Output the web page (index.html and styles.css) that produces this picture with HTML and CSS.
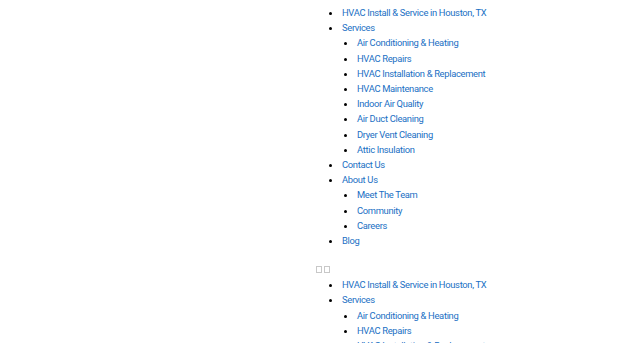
FILE: index.html
```html
<!DOCTYPE html>
<html>
<head>
<meta charset="utf-8">
<link rel="stylesheet" href="styles.css">
</head>
<body>
<nav class="menu">
  <ul class="list">
    <li><a href="#">HVAC Install &amp; Service in Houston, TX</a></li>
    <li><a href="#">Services</a>
      <ul class="sub">
        <li><a href="#">Air Conditioning &amp; Heating</a></li>
        <li><a href="#">HVAC Repairs</a></li>
        <li><a href="#">HVAC Installation &amp; Replacement</a></li>
        <li><a href="#">HVAC Maintenance</a></li>
        <li><a href="#">Indoor Air Quality</a></li>
        <li><a href="#">Air Duct Cleaning</a></li>
        <li><a href="#">Dryer Vent Cleaning</a></li>
        <li><a href="#">Attic Insulation</a></li>
      </ul>
    </li>
    <li><a href="#">Contact Us</a></li>
    <li><a href="#">About Us</a>
      <ul class="sub">
        <li><a href="#">Meet The Team</a></li>
        <li><a href="#">Community</a></li>
        <li><a href="#">Careers</a></li>
      </ul>
    </li>
    <li><a href="#">Blog</a></li>
  </ul>
  <div class="icons"><span class="box"></span><span class="box"></span></div>
  <ul class="list">
    <li><a href="#">HVAC Install &amp; Service in Houston, TX</a></li>
    <li><a href="#">Services</a>
      <ul class="sub">
        <li><a href="#">Air Conditioning &amp; Heating</a></li>
        <li><a href="#">HVAC Repairs</a></li>
        <li><a href="#">HVAC Installation &amp; Replacement</a></li>
        <li><a href="#">HVAC Maintenance</a></li>
      </ul>
    </li>
  </ul>
</nav>
</body>
</html>
```
FILE: styles.css
```css
html, body {
  margin: 0;
  padding: 0;
  background: #ffffff;
}
body {
  font-family: "Roboto", "Liberation Sans", sans-serif;
  font-size: 9.4px;
  letter-spacing: -0.32px;
}
.menu {
  margin-left: 316px;
  padding-top: 5px;
}
.list {
  margin: 0;
  padding-left: 26px;
  list-style: disc;
}
.sub {
  margin: 0;
  padding-left: 15px;
  list-style: disc;
}
li {
  line-height: 15.2px;
  color: #000;
}
li::marker {
  font-size: 11px;
}
a {
  color: #1a6fc4;
  text-decoration: none;
}
.icons {
  display: flex;
  gap: 2px;
  height: 10px;
  align-items: center;
  margin: 16px 0 3px 0;
}
.box {
  width: 4px;
  height: 5px;
  border: 1px solid #c8c8c8;
}
```
